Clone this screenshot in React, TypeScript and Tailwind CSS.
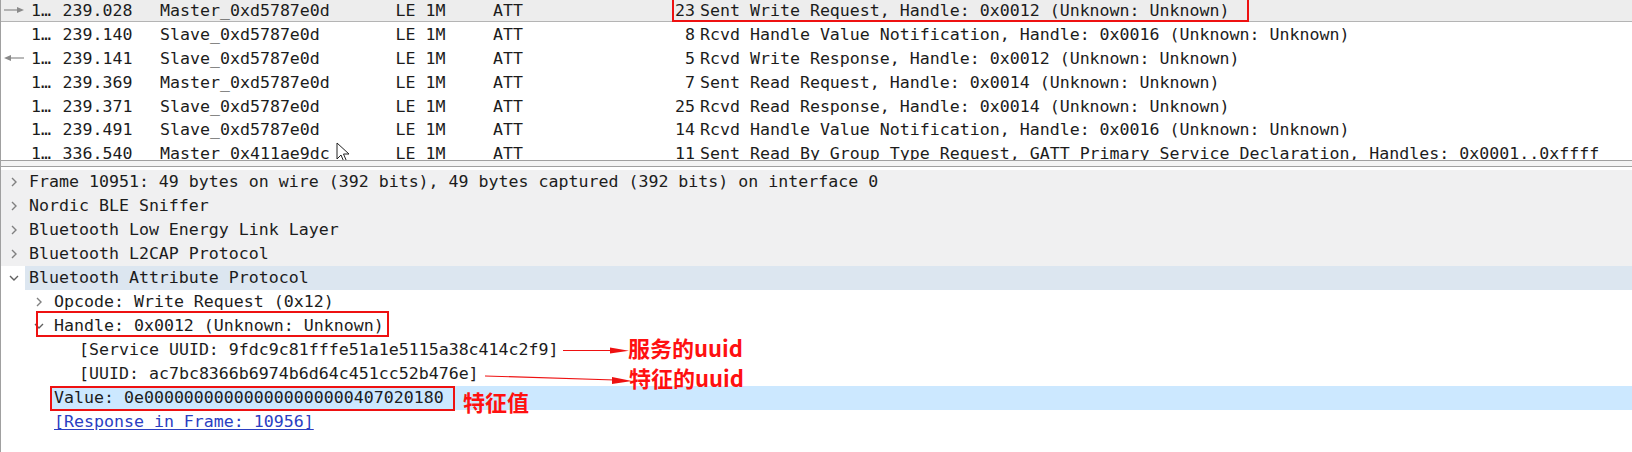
import React from "react";

type Packet = {
  arrow?: "right" | "left";
  no: string;
  time: string;
  src: string;
  phy: string;
  proto: string;
  len: string;
  info: string;
  current?: boolean;
};

const packets: Packet[] = [
  { arrow: "right", no: "1…", time: "239.028", src: "Master_0xd5787e0d", phy: "LE 1M", proto: "ATT", len: "23", info: "Sent Write Request, Handle: 0x0012 (Unknown: Unknown)", current: true },
  { no: "1…", time: "239.140", src: "Slave_0xd5787e0d", phy: "LE 1M", proto: "ATT", len: "8", info: "Rcvd Handle Value Notification, Handle: 0x0016 (Unknown: Unknown)" },
  { arrow: "left", no: "1…", time: "239.141", src: "Slave_0xd5787e0d", phy: "LE 1M", proto: "ATT", len: "5", info: "Rcvd Write Response, Handle: 0x0012 (Unknown: Unknown)" },
  { no: "1…", time: "239.369", src: "Master_0xd5787e0d", phy: "LE 1M", proto: "ATT", len: "7", info: "Sent Read Request, Handle: 0x0014 (Unknown: Unknown)" },
  { no: "1…", time: "239.371", src: "Slave_0xd5787e0d", phy: "LE 1M", proto: "ATT", len: "25", info: "Rcvd Read Response, Handle: 0x0014 (Unknown: Unknown)" },
  { no: "1…", time: "239.491", src: "Slave_0xd5787e0d", phy: "LE 1M", proto: "ATT", len: "14", info: "Rcvd Handle Value Notification, Handle: 0x0016 (Unknown: Unknown)" },
  { no: "1…", time: "336.540", src: "Master_0x411ae9dc", phy: "LE 1M", proto: "ATT", len: "11", info: "Sent Read By Group Type Request, GATT Primary Service Declaration, Handles: 0x0001..0xffff" },
];

type TreeRow = {
  lvl: 0 | 1 | 2;
  chev?: "right" | "down";
  text: string;
  look?: "gray" | "parent" | "selected" | "link";
};

const tree: TreeRow[] = [
  { lvl: 0, chev: "right", text: "Frame 10951: 49 bytes on wire (392 bits), 49 bytes captured (392 bits) on interface 0", look: "gray" },
  { lvl: 0, chev: "right", text: "Nordic BLE Sniffer", look: "gray" },
  { lvl: 0, chev: "right", text: "Bluetooth Low Energy Link Layer", look: "gray" },
  { lvl: 0, chev: "right", text: "Bluetooth L2CAP Protocol", look: "gray" },
  { lvl: 0, chev: "down", text: "Bluetooth Attribute Protocol", look: "parent" },
  { lvl: 1, chev: "right", text: "Opcode: Write Request (0x12)" },
  { lvl: 1, chev: "down", text: "Handle: 0x0012 (Unknown: Unknown)" },
  { lvl: 2, text: "[Service UUID: 9fdc9c81fffe51a1e5115a38c414c2f9]" },
  { lvl: 2, text: "[UUID: ac7bc8366b6974b6d64c451cc52b476e]" },
  { lvl: 1, text: "Value: 0e" + "0".repeat(21) + "407020180", look: "selected" },
  { lvl: 1, text: "[Response in Frame: 10956]", look: "link" },
];

const indent = ["pl-0", "pl-[25px]", "pl-[50px]"];

const RelArrow = ({ dir }: { dir: "right" | "left" }) => (
  <svg width="22" height="8" viewBox="0 0 22 8" className="ml-[2px]">
    {dir === "right" ? (
      <>
        <line x1="1" y1="4" x2="15" y2="4" stroke="#8a8a8a" strokeWidth="1.2" />
        <polygon points="14,1 21,4 14,7" fill="#8a8a8a" />
      </>
    ) : (
      <>
        <line x1="7" y1="4" x2="21" y2="4" stroke="#8a8a8a" strokeWidth="1.2" />
        <polygon points="8,1 1,4 8,7" fill="#8a8a8a" />
      </>
    )}
  </svg>
);

const Chevron = ({ dir }: { dir: "right" | "down" }) =>
  dir === "right" ? (
    <svg width="10" height="12" viewBox="0 0 10 12" className="ml-[8px]">
      <path d="M3 2 L7 6 L3 10" fill="none" stroke="#808080" strokeWidth="1.4" />
    </svg>
  ) : (
    <svg width="12" height="10" viewBox="0 0 12 10" className="ml-[7px]">
      <path d="M2 3 L6 7 L10 3" fill="none" stroke="#606060" strokeWidth="1.4" />
    </svg>
  );

export default function App() {
  return (
    <div className="relative w-[1632px] h-[452px] overflow-hidden bg-white border-l border-[#a0a0a0] font-['DejaVu_Sans_Mono',monospace] text-[16.6px] text-[#1c1c1c] whitespace-pre">
      {/* packet list */}
      <div className="relative h-[161px] overflow-hidden border-b border-[#a0a0a0]">
        <div className="mt-[-1.5px]">
          {packets.map((p, i) => (
            <div
              key={i}
              className={`flex h-[23.8px] items-center pt-[3px] ${p.current ? "bg-[#ededed] border-b border-[#b4b4b4]" : ""}`}
            >
              <div className="w-[30px] flex items-center mt-[-3px]">{p.arrow && <RelArrow dir={p.arrow} />}</div>
              <div className="w-[31.5px]">{p.no}</div>
              <div className="w-[97.5px]">{p.time}</div>
              <div className="w-[235.5px]">{p.src}</div>
              <div className="w-[97.5px]">{p.phy}</div>
              <div className="w-[110px]">{p.proto}</div>
              <div className="w-[92px] text-right">{p.len}</div>
              <div className="pl-[5px]">{p.info}</div>
            </div>
          ))}
        </div>
        {/* mouse pointer */}
        <svg width="14" height="22" viewBox="0 0 14 22" className="absolute left-[335px] top-[142px]">
          <path d="M1 1 L1 17 L5 13 L8 20 L10.5 19 L7.5 12 L13 12 Z" fill="#fff" stroke="#222" strokeWidth="1" />
        </svg>
      </div>

      {/* splitter */}
      <div className="h-[6px] bg-[#f4f4f4] border-b border-[#a0a0a0]" />

      {/* packet details */}
      <div className="pt-[2.5px]">
        {tree.map((r, i) => (
          <div
            key={i}
            className={`flex h-[24px] items-stretch ${indent[r.lvl]} ${r.look === "gray" ? "bg-[#f0f0f1]" : ""}`}
          >
            <div className="w-[24px] flex items-center shrink-0">{r.chev && <Chevron dir={r.chev} />}</div>
            <div
              className={`flex-1 flex items-center pl-[4px] pt-[2px] ${
                r.look === "parent" ? "bg-[#dce6f0]" : r.look === "selected" ? "bg-[#cce8ff]" : ""
              }`}
            >
              <span className={r.look === "link" ? "text-[#2b3ec2] underline underline-offset-2" : ""}>{r.text}</span>
            </div>
          </div>
        ))}
      </div>

      {/* red annotations */}
      <div className="absolute left-[671px] top-[-2px] w-[577px] h-[24px] border-2 border-[#ee1111]" />
      <div className="absolute left-[35px] top-[311px] w-[353px] h-[26px] border-2 border-[#ee1111]" />
      <div className="absolute left-[49px] top-[386px] w-[405px] h-[25px] border-2 border-[#ee1111]" />

      <svg width="1632" height="452" className="absolute left-0 top-0 pointer-events-none">
        <line x1="562" y1="350.5" x2="612" y2="350.5" stroke="#ee1111" strokeWidth="1.2" />
        <polygon points="609,347.5 628,350.7 609,353.5" fill="#ee1111" />
        <line x1="484" y1="376" x2="614" y2="380" stroke="#ee1111" strokeWidth="1.2" />
        <polygon points="611,377 631,381 611,384" fill="#ee1111" />
      </svg>

      <div className="absolute left-[627px] top-[335px] leading-[24px] text-[22px] font-bold text-[#ff1010] font-['Noto_Sans_CJK_SC',sans-serif]">
        服务的uuid
      </div>
      <div className="absolute left-[628px] top-[365px] leading-[24px] text-[22px] font-bold text-[#ff1010] font-['Noto_Sans_CJK_SC',sans-serif]">
        特征的uuid
      </div>
      <div className="absolute left-[462px] top-[389px] leading-[24px] text-[22px] font-bold text-[#ff1010] font-['Noto_Sans_CJK_SC',sans-serif]">
        特征值
      </div>
    </div>
  );
}
